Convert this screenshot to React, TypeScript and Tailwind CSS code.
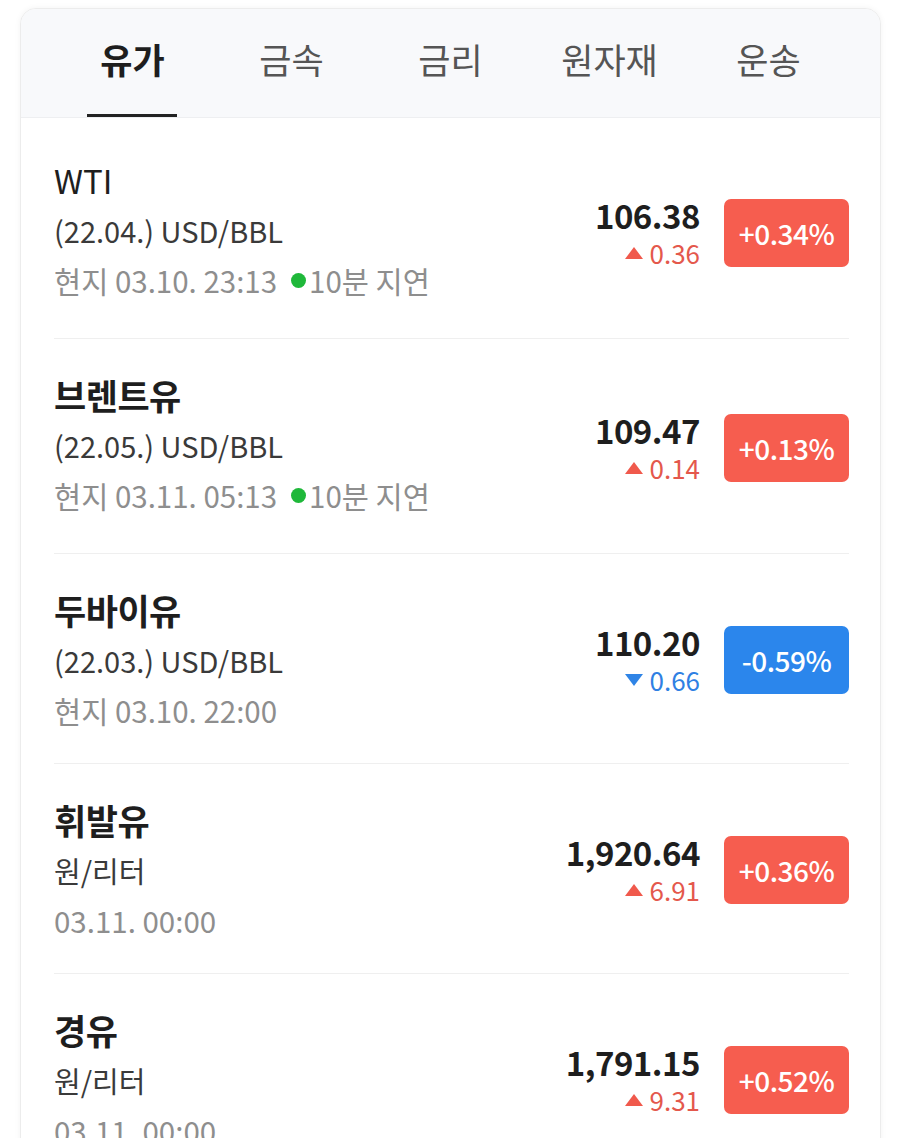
import { useState } from "react";

type Item = {
  name: string;
  unit: string;
  time: string;
  delayed?: boolean;
  price: string;
  diff: string;
  rate: string;
  up: boolean;
};

const tabs = ["유가", "금속", "금리", "원자재", "운송"];

const items: Item[] = [
  { name: "WTI", unit: "(22.04.) USD/BBL", time: "현지 03.10. 23:13", delayed: true, price: "106.38", diff: "0.36", rate: "+0.34%", up: true },
  { name: "브렌트유", unit: "(22.05.) USD/BBL", time: "현지 03.11. 05:13", delayed: true, price: "109.47", diff: "0.14", rate: "+0.13%", up: true },
  { name: "두바이유", unit: "(22.03.) USD/BBL", time: "현지 03.10. 22:00", price: "110.20", diff: "0.66", rate: "-0.59%", up: false },
  { name: "휘발유", unit: "원/리터", time: "03.11. 00:00", price: "1,920.64", diff: "6.91", rate: "+0.36%", up: true },
  { name: "경유", unit: "원/리터", time: "03.11. 00:00", price: "1,791.15", diff: "9.31", rate: "+0.52%", up: true },
];

function Row({ item, last }: { item: Item; last: boolean }) {
  const latin = /^[A-Z]+$/.test(item.name);
  return (
    <div className={`flex items-center justify-between pt-[31px] pb-[28px] ${last ? "" : "border-b border-[#efefef]"}`}>
      <div className={`flex flex-col ${item.delayed ? "pb-[5px]" : ""}`}>
        <div
          className={`leading-[50px] text-[#1e1e1e] ${
            latin ? "text-[33px] font-normal" : "text-[35px] font-semibold tracking-[-0.5px]"
          }`}
        >
          {item.name}
        </div>
        <div className="text-[29px] leading-[50px] text-[#3a3a3a]">{item.unit}</div>
        <div className="text-[29.5px] leading-[50px] text-[#8e8e8e] flex items-center">
          <span>{item.time}</span>
          {item.delayed && (
            <span className="flex items-center ml-[14px]">
              <span className="w-[15px] h-[15px] rounded-full bg-[#1fb83a] mr-[3px]" />
              <span>10분 지연</span>
            </span>
          )}
        </div>
      </div>
      <div className="flex items-center gap-[24px]">
        <div className="flex flex-col items-end">
          <div className="text-[33px] leading-[40px] font-bold text-[#1e1e1e] tracking-[-0.5px]">{item.price}</div>
          <div className={`flex items-center text-[26px] leading-[36px] ${item.up ? "text-[#e4584c]" : "text-[#2f80e3]"}`}>
            <svg width="18" height="12" viewBox="0 0 18 12" className="mr-[6px]">
              {item.up ? (
                <polygon points="9,0 18,12 0,12" fill="#f0594c" />
              ) : (
                <polygon points="0,0 18,0 9,12" fill="#2f84e6" />
              )}
            </svg>
            <span>{item.diff}</span>
          </div>
        </div>
        <div
          className={`w-[125px] h-[68px] rounded-[7px] flex items-center justify-center text-white text-[28px] font-medium tracking-[-0.5px] ${
            item.up ? "bg-[#f65d4f]" : "bg-[#2b86ec]"
          }`}
        >
          {item.rate}
        </div>
      </div>
    </div>
  );
}

export default function App() {
  const [active, setActive] = useState(0);

  return (
    <div
      className="w-[900px] h-[1138px] overflow-hidden bg-white pt-[8px] px-[20px]"
      style={{ fontFamily: '"Noto Sans CJK KR", "Noto Sans", sans-serif' }}
    >
      <div className="w-[861px] rounded-[16px] border border-[#ececec] bg-white shadow-[0_0_6px_rgba(0,0,0,0.05)] overflow-hidden">
        <div className="bg-[#f8f9fb] px-[32px] flex border-b border-[#eeeff1]">
          {tabs.map((t, i) => (
            <button
              key={t}
              type="button"
              onClick={() => setActive(i)}
              className="flex-1 h-[108px] pb-[8px] flex items-center justify-center relative"
            >
              <span className={`text-[35px] ${i === active ? "font-bold text-[#1e1e1e]" : "text-[#555]"}`}>{t}</span>
              {i === active && <span className="absolute bottom-0 left-[34px] right-[35px] h-[3px] bg-[#222]" />}
            </button>
          ))}
        </div>
        <div className="pl-[33px] pr-[31px] pt-[6px]">
          {items.map((item, i) => (
            <Row key={item.name} item={item} last={i === items.length - 1} />
          ))}
        </div>
      </div>
    </div>
  );
}
